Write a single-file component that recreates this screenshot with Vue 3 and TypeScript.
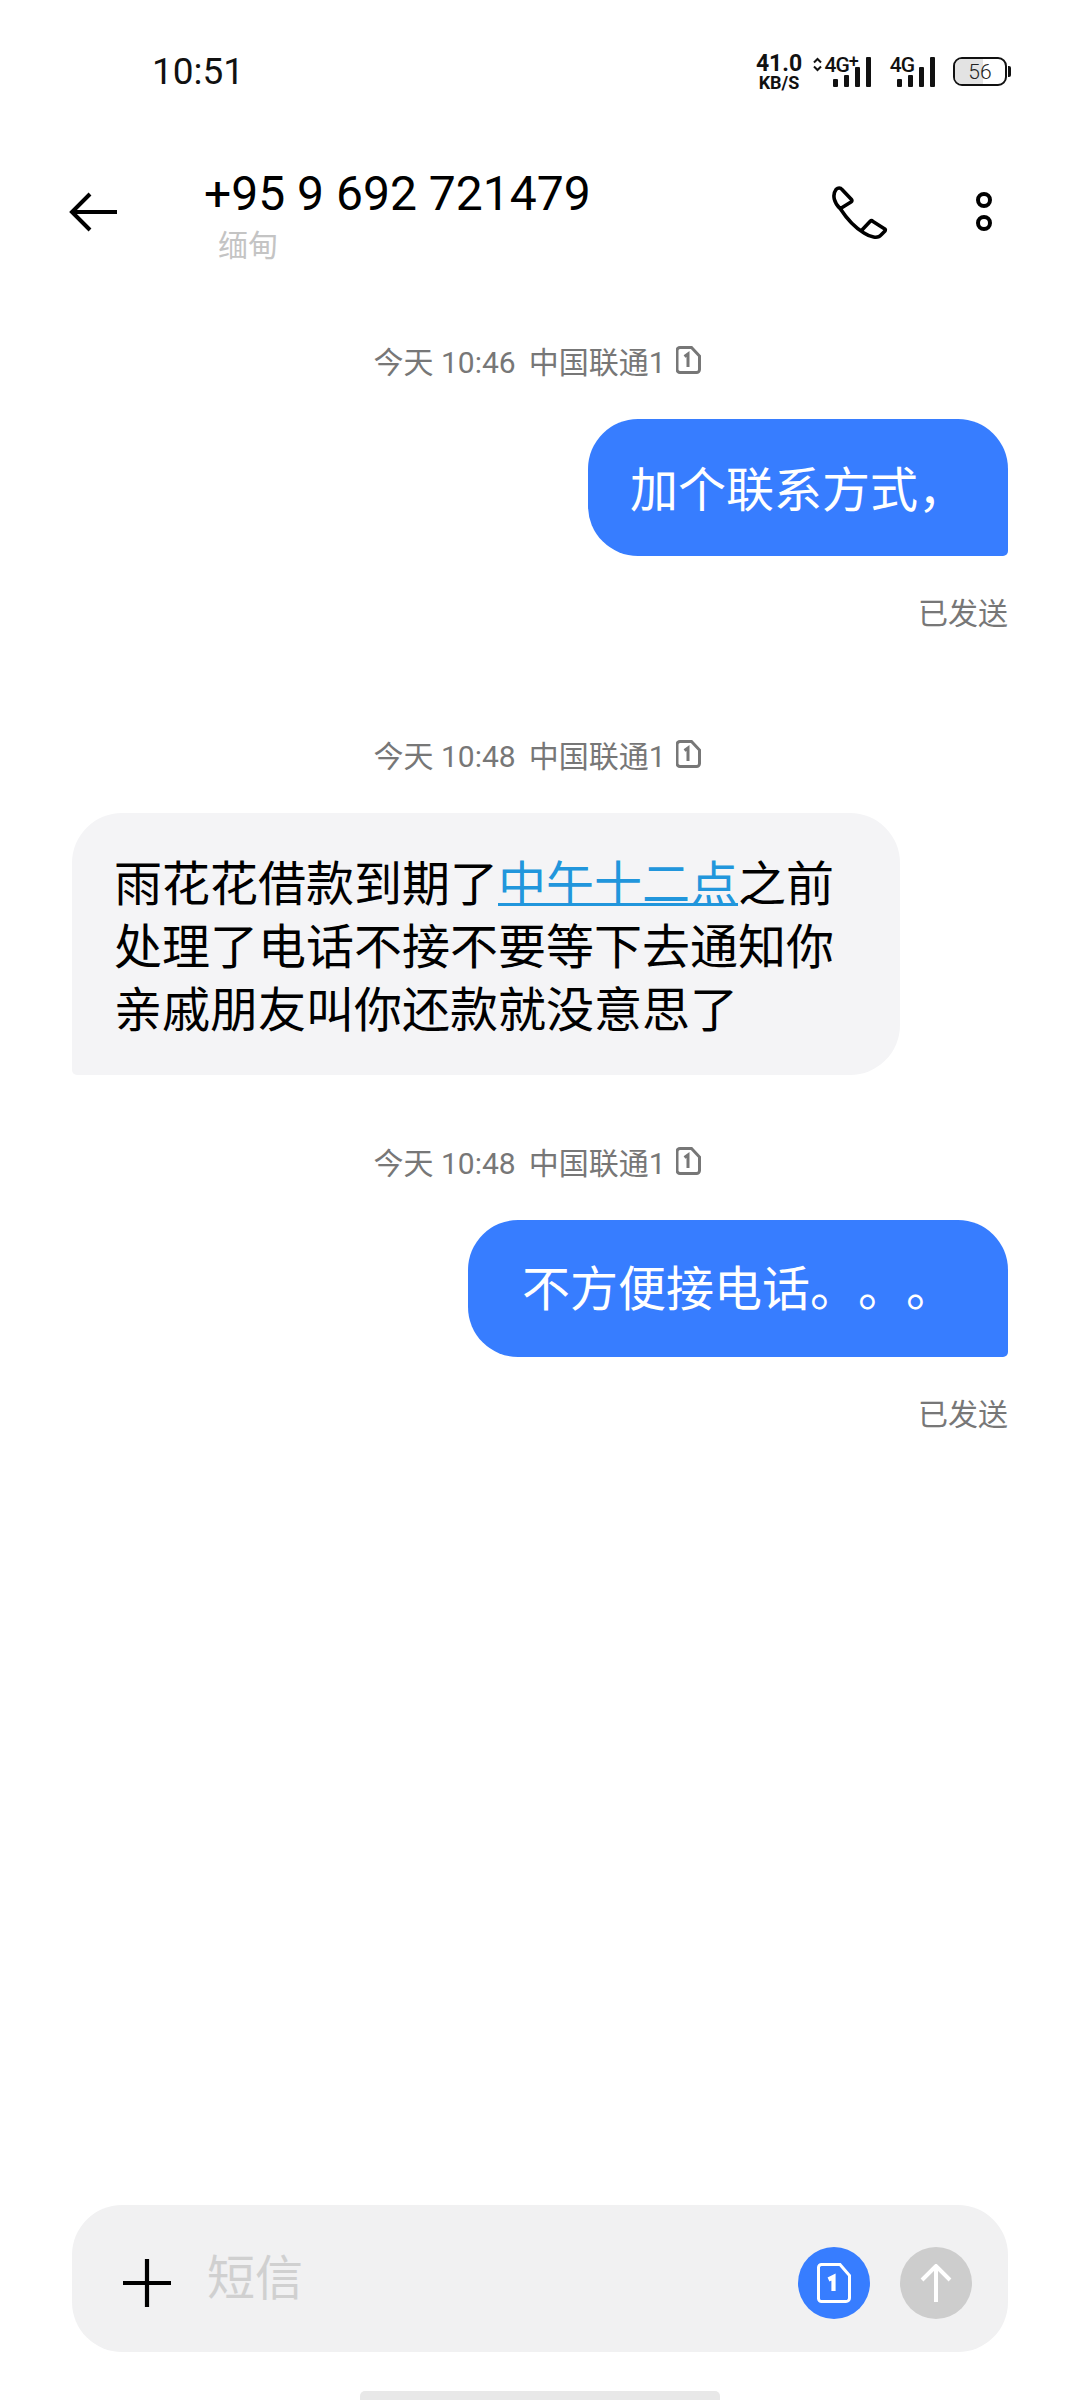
<script setup lang="ts">
type Msg = { time: string; side: 'in' | 'out'; status?: string; parts: { text: string; link?: boolean }[] };

const messages: Msg[] = [
  { time: '今天 10:46', side: 'out', status: '已发送', parts: [{ text: '加个联系方式，' }] },
  {
    time: '今天 10:48',
    side: 'in',
    parts: [
      { text: '雨花花借款到期了' },
      { text: '中午十二点', link: true },
      { text: '之前处理了电话不接不要等下去通知你亲戚朋友叫你还款就没意思了' },
    ],
  },
  { time: '今天 10:48', side: 'out', status: '已发送', parts: [{ text: '不方便接电话。。。' }] },
];
</script>

<template>
  <div class="page">
    <div class="status-bar">
      <span class="clock">10:51</span>
      <div class="status-icons">
        <div class="speed">
          <span class="speed-num">41.0</span>
          <span class="speed-unit">KB/S</span>
        </div>
        <div class="signal first">
          <svg class="updown" width="9" height="15" viewBox="0 0 9 15">
            <path d="M1 5.500 4.500 2 8 5.500M1 9.500 4.500 13 8 9.500" fill="none" stroke="#111" stroke-width="2" />
          </svg>
          <span class="net">4G<sup>+</sup></span>
          <div class="bars">
            <i class="b1"></i><i class="b2"></i><i class="b3"></i><i class="b4"></i>
          </div>
        </div>
        <div class="signal second">
          <span class="net">4G</span>
          <div class="bars">
            <i class="b1"></i><i class="b2"></i><i class="b3"></i><i class="b4"></i>
          </div>
        </div>
        <div class="battery">
          <div class="battery-body">
            <div class="battery-fill"></div>
            <span class="battery-num">56</span>
          </div>
          <div class="battery-cap"></div>
        </div>
      </div>
    </div>

    <div class="header">
      <svg class="back" width="50" height="40" viewBox="0 0 50 40">
        <path d="M21 2 3 20l18 18M3 20h45" fill="none" stroke="#000" stroke-width="4" />
      </svg>
      <div class="contact">
        <div class="number">+95 9 692 721479</div>
        <div class="region">缅甸</div>
      </div>
      <svg class="call" width="56" height="56" viewBox="0 0 56 56">
        <path
          d="M4 3.500C6 1.500 8.500 1.500 10 3.500l9.500 10q1 1.500-.5 2.500L8.500 22.500M4 3.500C0 9 2 17 8.500 23 15 33 22 41 32 47c6 4 14 6 17 2l4-4q1-2-1-2.500l-11-7q-1.500-1.500-3 0L30 44"
          fill="none"
          stroke="#000"
          stroke-width="3.600"
          stroke-linejoin="round"
          stroke-linecap="round"
        />
      </svg>
      <div class="more">
        <i></i>
        <i></i>
      </div>
    </div>

    <div class="thread">
      <div v-for="(m, i) in messages" :key="i" class="group" :class="m.side">
        <div class="stamp">
          <span>{{ m.time }}</span>
          <span>中国联通1</span>
          <svg width="25" height="28" viewBox="0 0 25 28">
            <path d="M4 1.500h11.500l8 8.500v13.500a3 3 0 0 1-3 3H4a3 3 0 0 1-3-3v-19a3 3 0 0 1 3-3Z" fill="none" stroke="#777" stroke-width="3" />
            <path d="M8.500 10.500l3.500-2.500v13" fill="none" stroke="#777" stroke-width="3" />
          </svg>
        </div>
        <div class="bubble">
          <template v-for="(p, j) in m.parts" :key="j">
            <a v-if="p.link" class="link">{{ p.text }}</a>
            <template v-else>{{ p.text }}</template>
          </template>
        </div>
        <div v-if="m.status" class="sent">{{ m.status }}</div>
      </div>
    </div>

    <div class="compose">
      <svg class="plus" width="48" height="48" viewBox="0 0 48 48">
        <path d="M24 0v48M0 24h48" fill="none" stroke="#000" stroke-width="4.200" />
      </svg>
      <span class="placeholder">短信</span>
      <div class="round sim">
        <svg width="34" height="40" viewBox="0 0 34 40">
          <path d="M4.500 1.500H23L32.500 12.500V35a3.500 3.500 0 0 1-3.500 3.500H4.500A3 3 0 0 1 1.500 35.500V4.500a3 3 0 0 1 3-3Z" fill="none" stroke="#fff" stroke-width="3" />
          <path d="M11.500 16.500l5-2.500v14" fill="none" stroke="#fff" stroke-width="4.200" />
        </svg>
      </div>
      <div class="round send">
        <svg width="32" height="38" viewBox="0 0 32 38">
          <path d="M16 38V2M2 16 16 2l14 14" fill="none" stroke="#fff" stroke-width="4" />
        </svg>
      </div>
    </div>
    <div class="home-bar"></div>
  </div>
</template>

<style scoped>
.page {
  width: 1080px;
  height: 2400px;
  display: flex;
  flex-direction: column;
  background: #fff;
  overflow: hidden;
  font-family: Roboto, "Noto Sans CJK SC", sans-serif;
  color: #000;
  text-spacing-trim: space-all;
}

.status-bar {
  height: 142px;
  flex: none;
  display: flex;
  align-items: center;
  justify-content: space-between;
  padding: 0 69px 0 152px;
  box-sizing: border-box;
}

.clock {
  font-size: 37px;
  color: #111;
}

.status-icons {
  display: flex;
  align-items: center;
}

.speed {
  display: flex;
  flex-direction: column;
  align-items: center;
  width: 45px;
  margin-top: 2px;
  color: #111;
  font-weight: 700;
  line-height: 1;
}

.speed-num {
  font-size: 23px;
  line-height: 20px;
}

.speed-unit {
  font-size: 18px;
  line-height: 17px;
}

.signal {
  display: flex;
  align-items: flex-start;
  height: 30px;
  margin-top: 2px;
}

.signal.first {
  margin-left: 11px;
}

.signal.second {
  margin-left: 19px;
}

.updown {
  flex: none;
  margin-right: 3px;
}

.net {
  font-size: 21px;
  line-height: 16px;
  font-weight: 500;
  color: #111;
  letter-spacing: -1px;
  white-space: nowrap;
}

.net sup {
  font-size: 18px;
  line-height: 0;
  vertical-align: 5px;
}

.bars {
  flex: none;
  display: flex;
  align-items: flex-end;
  gap: 6px;
  height: 30px;
}

.first .bars {
  margin-left: -25px;
}

.second .bars {
  margin-left: -17px;
}

.bars i {
  display: block;
  width: 5px;
  border-radius: 1px;
  background: #111;
}

.bars .b1 {
  height: 8px;
}

.bars .b2 {
  height: 12px;
}

.bars .b3 {
  height: 20px;
}

.bars .b4 {
  height: 30px;
}

.battery {
  display: flex;
  align-items: center;
  margin-left: 18px;
  margin-top: 1px;
}

.battery-body {
  position: relative;
  width: 54px;
  height: 29px;
  border: 2.500px solid #111;
  border-radius: 9px;
  box-sizing: border-box;
  overflow: hidden;
  display: flex;
  align-items: center;
  justify-content: center;
}

.battery-fill {
  position: absolute;
  left: 0;
  top: 0;
  bottom: 0;
  width: 56%;
  background: #e3e3e3;
}

.battery-num {
  position: relative;
  font-size: 21px;
  font-weight: 300;
  color: #222;
}

.battery-cap {
  width: 3px;
  height: 11px;
  margin-left: 1px;
  background: #111;
  border-radius: 0 2px 2px 0;
}

.header {
  flex: none;
  height: 149px;
  display: flex;
  align-items: flex-start;
  padding: 24px 88px 0 69px;
  box-sizing: border-box;
}

.back {
  margin-top: 26px;
  flex: none;
}

.contact {
  margin-left: 85px;
  flex: 1;
}

.number {
  font-size: 48px;
  line-height: 56px;
  color: #000;
}

.region {
  margin: 6px 0 0 14px;
  font-size: 30px;
  line-height: 36px;
  color: #c4c4c4;
}

.call {
  margin-top: 20px;
  flex: none;
}

.more {
  margin: 26px 0 0 88px;
  display: flex;
  flex-direction: column;
  gap: 7px;
}

.more i {
  display: block;
  width: 16px;
  height: 16px;
  border: 4px solid #000;
  border-radius: 50%;
  box-sizing: border-box;
}

.thread {
  flex: 1;
  padding: 0 72px;
  display: flex;
  flex-direction: column;
}

.group {
  display: flex;
  flex-direction: column;
  margin-top: 49px;
}

.group.out + .group {
  margin-top: 100px;
}

.group.in + .group {
  margin-top: 66px;
}

.stamp {
  height: 40px;
  padding-right: 6px;
  display: flex;
  align-items: center;
  justify-content: center;
  gap: 13px;
  font-size: 30px;
  color: #777;
}

.stamp svg {
  margin-left: -3px;
}

.bubble {
  margin-top: 39px;
  font-size: 48px;
  line-height: 63px;
  box-sizing: border-box;
}

.out .bubble {
  align-self: flex-end;
  padding: 40px 42px 0;
  height: 137px;
  background: #377dff;
  color: #fff;
  border-radius: 50px 50px 5px 50px;
}

.group:nth-child(3) .bubble {
  padding: 38px 54px 0;
}

.in .bubble {
  align-self: flex-start;
  width: 828px;
  height: 262px;
  padding: 40px 60px 0 42px;
  background: #f4f4f6;
  border-radius: 50px 50px 50px 5px;
}

.link {
  color: #2196dc;
  text-decoration: underline;
  text-decoration-thickness: 3px;
  text-underline-offset: 2px;
}

.sent {
  margin-top: 38px;
  align-self: flex-end;
  font-size: 30px;
  line-height: 40px;
  color: #777;
}

.compose {
  flex: none;
  margin: 0 72px 39px;
  height: 147px;
  display: flex;
  align-items: center;
  padding: 0 36px 0 51px;
  background: #f1f1f2;
  border-radius: 50px;
  box-sizing: border-box;
}

.plus {
  flex: none;
  margin-top: 9px;
}

.placeholder {
  flex: 1;
  margin: 0 0 9px 36px;
  font-size: 48px;
  color: #d0d0d0;
}

.round {
  width: 72px;
  height: 72px;
  margin-top: 9px;
  border-radius: 50%;
  display: flex;
  align-items: center;
  justify-content: center;
}

.sim {
  background: #377dff;
}

.send {
  margin-left: 30px;
  background: #cdcdcd;
}

.home-bar {
  flex: none;
  align-self: center;
  width: 360px;
  height: 9px;
  background: #e8e8e8;
  border-radius: 5px 5px 0 0;
}
</style>
